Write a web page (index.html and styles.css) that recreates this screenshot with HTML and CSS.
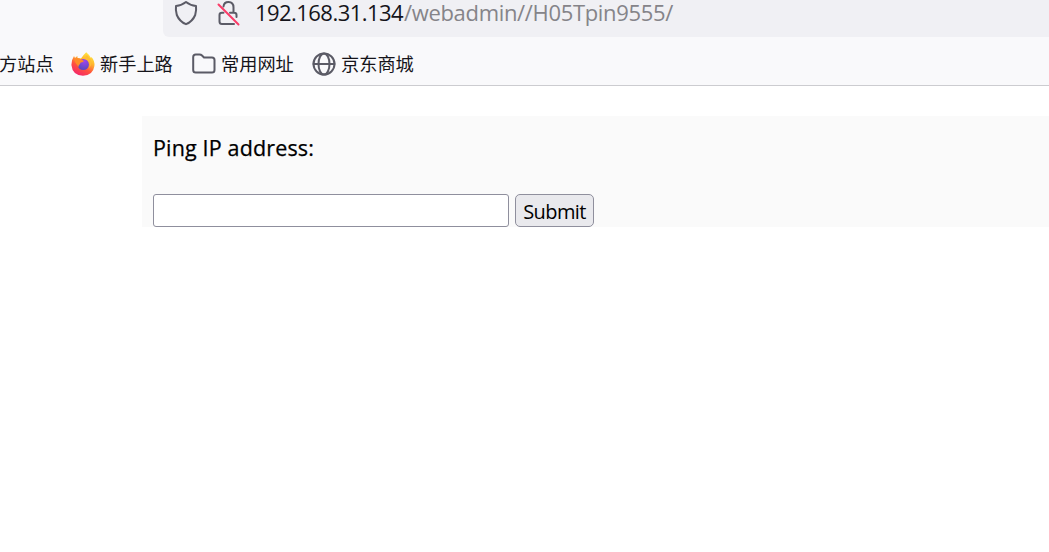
FILE: index.html
```html
<!DOCTYPE html>
<html lang="zh-CN">
<head>
<meta charset="utf-8">
<title>Ping</title>
<link rel="stylesheet" href="styles.css">
</head>
<body>
<header class="browser">
  <div class="address-bar">
    <svg class="shield" width="24" height="26" viewBox="0 0 24 26"><path d="M12 2Q16 5.3 22 6Q22.6 10 21.2 15Q18.5 21.5 12 24.2Q5.500 21.500 2.800 15Q1.400 10 2 6Q8 5.300 12 2Z"/></svg>
    <svg class="lock" width="24" height="26" viewBox="0 0 24 26"><path d="M7.500 6.500Q8 2 12.500 2Q17.500 2 17.500 7.500V12M14 12.700H18Q20.500 12.700 20.500 15V17M7.500 12.700H6Q3.500 12.700 3.500 15V21.500Q3.500 24 6 24H18"/><path class="slash" d="M2.500 4.500L22.500 24.500"/></svg>
    <div class="url"><span class="host">192.168.31.134</span><span class="path">/webadmin//H05Tpin9555/</span></div>
  </div>
  <nav class="bookmarks">
    <span class="bookmark clipped"><span class="name">方站点</span></span>
    <span class="bookmark firefox-item">
      <svg width="24" height="24" viewBox="0 0 24 24">
        <defs>
          <linearGradient id="flame" x1=".8" y1="0" x2=".25" y2="1"><stop offset="0" stop-color="#fff044"/><stop offset=".35" stop-color="#ffb52d"/><stop offset=".65" stop-color="#ff513d"/><stop offset="1" stop-color="#f32370"/></linearGradient>
          <radialGradient id="globe" cx=".6" cy=".2" r=".8"><stop offset="0" stop-color="#a044ed"/><stop offset="1" stop-color="#5748bd"/></radialGradient>
        </defs>
        <path fill="url(#flame)" d="M15.200.3Q18.500 3 20 6L20.500 5Q24 9 23.400 14Q22 23.500 12 23.700Q1.500 23.500.4 13Q.3 8 3 4L4 6Q5.500 4.200 6.500 4.300V6L10 6.500Q12.500 3 15.200.3Z"/>
        <circle cx="12.300" cy="12.500" r="5.600" fill="url(#globe)"/>
        <path fill="#ff8b27" d="M3 7Q7 5.500 10 7.300L13 9Q11.500 10.500 9.700 10.600L9 12Q7.500 13 7.500 15Q4 11 3 7Z"/>
        <path fill="#ffbd35" d="M13 6Q17 6.500 18.600 10Q19.700 14 17 17Q22 13 19.500 7L16 3Z"/>
      </svg><span class="name">新手上路</span></span>
    <span class="bookmark folder-item">
      <svg class="line-icon" width="24" height="24" viewBox="0 0 24 24"><path d="M1.200 17.500V5Q1.200 2.500 3.700 2.500H7.500Q9 2.500 10 3.500L12 5.500H20Q22.500 5.500 22.500 8V18Q22.500 20.500 20 20.500H3.700Q1.200 20.500 1.200 18Z"/></svg><span class="name">常用网址</span></span>
    <span class="bookmark globe-item">
      <svg class="line-icon" width="24" height="24" viewBox="0 0 24 24"><circle cx="12" cy="12" r="10.500"/><ellipse cx="12" cy="12" rx="5.500" ry="10.500"/><path d="M1.500 12H22.500"/></svg><span class="name">京东商城</span></span>
  </nav>
</header>
<main class="panel">
  <form>
    <label for="ip">Ping IP address:</label>
    <div class="controls"><input id="ip" type="text"><button type="button">Submit</button></div>
  </form>
</main>
</body>
</html>
```
FILE: styles.css
```css
* { box-sizing: border-box; }
body {
  margin: 0;
  height: 552px;
  overflow: hidden;
  background: #fff;
  font-family: "Open Sans", "Noto Sans", sans-serif;
}
.browser {
  height: 86px;
  background: #f9f9fb;
  border-bottom: 1px solid #ccccd0;
}
.address-bar {
  display: flex;
  align-items: flex-start;
  height: 37px;
  margin-left: 163px;
  padding-left: 11px;
  background: #f0f0f4;
  border-bottom-left-radius: 6px;
}
.shield, .lock, .line-icon {
  fill: none;
  stroke: #5b5b66;
  stroke-width: 2;
  stroke-linejoin: round;
  stroke-linecap: round;
}
.lock { margin-left: 18px; }
.lock .slash { stroke: #fb3c68; }
.url {
  display: flex;
  margin-left: 15px;
  font-size: 22px;
  line-height: 24px;
  white-space: nowrap;
}
.host { width: 149px; color: #15141a; letter-spacing: -.55px; }
.path { color: #858489; letter-spacing: -.33px; }
.bookmarks { display: flex; height: 48px; padding-top: 3px; }
.bookmark {
  display: flex;
  align-items: center;
  height: 48px;
  font: 18.200px "Noto Sans CJK SC", sans-serif;
  color: #15141a;
  white-space: nowrap;
}
.bookmark .name { padding-bottom: 2px; }
.bookmark svg { margin-right: 5px; flex: none; }
.clipped { width: 72px; margin-left: -1px; }
.firefox-item { width: 121px; }
.folder-item { width: 120px; }
.panel {
  height: 111px;
  margin: 30px 0 0 142px;
  padding: 16px 0 0 11px;
  background: #fafafa;
}
label {
  display: block;
  height: 62px;
  font-size: 21.500px;
  letter-spacing: .15px;
  line-height: 32px;
  color: #000;
  -webkit-text-stroke: .25px #000;
}
.controls { display: flex; gap: 6px; }
input {
  width: 356px;
  height: 33px;
  padding: 2px 5px;
  background: #fff;
  border: 1px solid #8f8f9d;
  border-radius: 3px;
}
button {
  width: 79px;
  height: 33px;
  padding: 2px 0 0;
  background: #e9e9ed;
  border: 1px solid #8f8f9d;
  border-radius: 5px;
  color: #000;
  font: 20px/29px "Open Sans", sans-serif;
  letter-spacing: -.6px;
}
```
